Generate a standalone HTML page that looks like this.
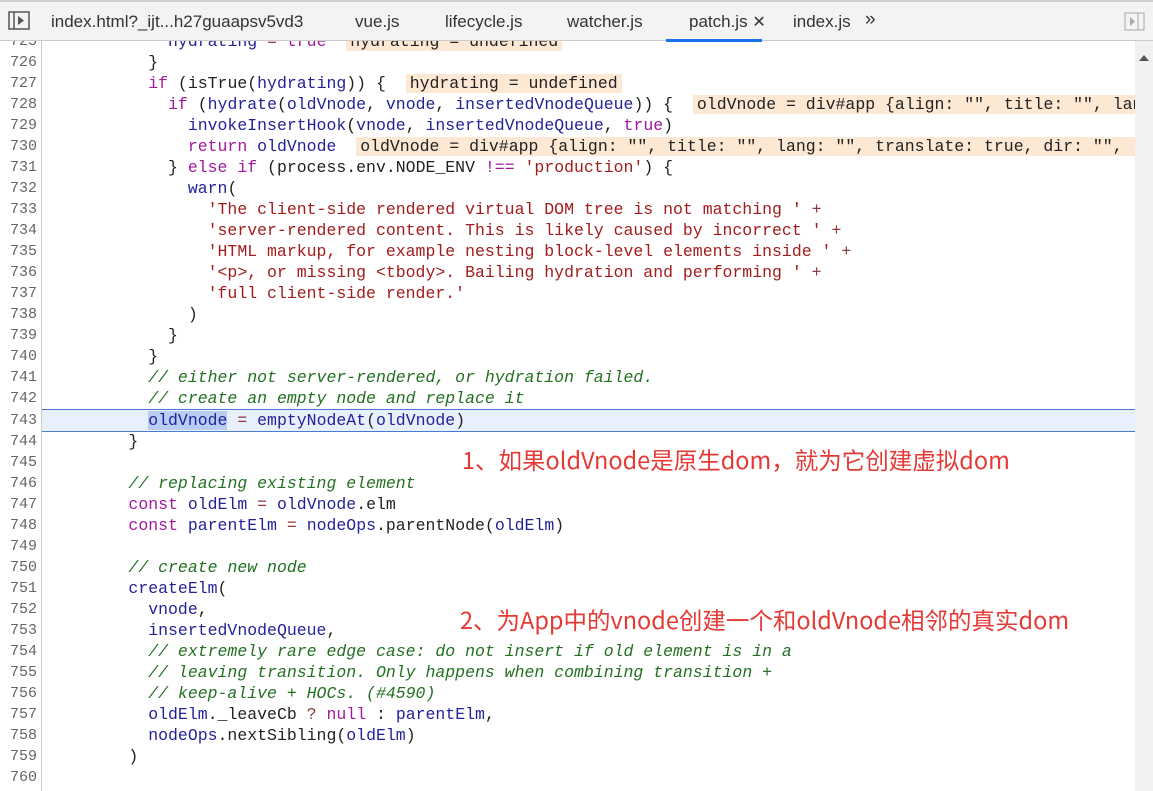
<!DOCTYPE html>
<html><head><meta charset="utf-8"><style>
*{margin:0;padding:0;box-sizing:border-box}
body{width:1153px;height:791px;overflow:hidden;background:#fff;position:relative;font-family:"Liberation Sans","Noto Sans CJK SC",sans-serif}
#tabs{position:absolute;left:0;top:0;width:1153px;height:41px;background:#f3f3f3;border-bottom:1px solid #cbcbcb;border-top:2px solid #d0d0d0;font-size:17px;color:#333}
#tabs span{position:absolute;top:10px;white-space:nowrap}
#ul{position:absolute;left:666px;top:37px;width:96px;height:3px;background:#1a73e8}
#gut{position:absolute;left:0;top:41px;width:42px;height:750px;border-right:1px solid #ccc;background:#fff}
#sb{position:absolute;left:1135px;top:41px;width:18px;height:750px;background:#f1f1f1}
#code{position:absolute;left:0;top:41px;width:1135px;height:750px;overflow:hidden}
.l{position:absolute;left:0;height:21px;width:1135px;white-space:pre;font-family:"Liberation Mono",monospace;font-size:16.5px;line-height:21px;color:#222}
.n{position:absolute;left:0;width:37px;text-align:right;color:#666;font-size:15px}
.c{position:absolute;left:69px}
.k{color:#a1199e}.v{color:#232398}.s{color:#a31c1c}.m{color:#237023;font-style:italic}.o{color:#8b3b3b}
.b{background:#fde8d3;padding:0 4px}
.hl{background:#e8f0fe;border-top:1px solid #4a7bd0;border-bottom:1px solid #4a7bd0}
.sel{background:#b9cdf6}
.a{position:absolute;color:#e53935;font-size:23.5px;white-space:nowrap;font-family:"Noto Sans CJK SC",sans-serif}
</style></head><body>
<div id="tabs">
<svg style="position:absolute;left:8px;top:9px" width="22" height="20"><rect x="1" y="1" width="20" height="17" fill="none" stroke="#555" stroke-width="1.5"/><line x1="6" y1="1" x2="6" y2="18" stroke="#555" stroke-width="1.5"/><path d="M10 5 L16 9.5 L10 14Z" fill="#555"/></svg>
<span style="left:51px">index.html?_ijt...h27guaapsv5vd3</span>
<span style="left:355px">vue.js</span>
<span style="left:445px">lifecycle.js</span>
<span style="left:567px">watcher.js</span>
<span style="left:689px">patch.js <span style="position:static;font-size:16px">✕</span></span>
<span style="left:793px">index.js</span>
<span style="left:865px;font-size:19px;top:7px">»</span>
<svg style="position:absolute;left:1124px;top:10px" width="22" height="20"><rect x="1" y="1" width="19" height="17" fill="none" stroke="#aaa"/><line x1="14" y1="1" x2="14" y2="18" stroke="#aaa"/><path d="M6 5 L11 9.5 L6 14Z" fill="#aaa"/></svg>
<div id="ul"></div>
</div>
<div id="gut"></div>
<div id="sb"><div style="position:absolute;left:4px;top:14px;border-left:5px solid transparent;border-right:5px solid transparent;border-bottom:6px solid #555"></div></div>
<div id="code">
<div class="l" style="top:-10px"><span class="n">725</span><span class="c">          <span class="v">hydrating</span> <span class="o">=</span> <span class="k">true</span>  <span class="b">hydrating = undefined</span></span></div>
<div class="l" style="top:11px"><span class="n">726</span><span class="c">        }</span></div>
<div class="l" style="top:32px"><span class="n">727</span><span class="c">        <span class="k">if</span> (isTrue(<span class="v">hydrating</span>)) {  <span class="b">hydrating = undefined</span></span></div>
<div class="l" style="top:53px"><span class="n">728</span><span class="c">          <span class="k">if</span> (<span class="v">hydrate</span>(<span class="v">oldVnode</span>, <span class="v">vnode</span>, <span class="v">insertedVnodeQueue</span>)) {  <span class="b">oldVnode = div#app {align: "", title: "", lang: "", translate</span></span></div>
<div class="l" style="top:74px"><span class="n">729</span><span class="c">            <span class="v">invokeInsertHook</span>(<span class="v">vnode</span>, <span class="v">insertedVnodeQueue</span>, <span class="k">true</span>)</span></div>
<div class="l" style="top:95px"><span class="n">730</span><span class="c">            <span class="k">return</span> <span class="v">oldVnode</span>  <span class="b">oldVnode = div#app {align: "", title: "", lang: "", translate: true, dir: "", ...</span></span></div>
<div class="l" style="top:116px"><span class="n">731</span><span class="c">          } <span class="k">else if</span> (process.env.NODE_ENV <span class="k">!==</span> <span class="s">'production'</span>) {</span></div>
<div class="l" style="top:137px"><span class="n">732</span><span class="c">            <span class="v">warn</span>(</span></div>
<div class="l" style="top:158px"><span class="n">733</span><span class="c">              <span class="s">'The client-side rendered virtual DOM tree is not matching '</span> <span class="o">+</span></span></div>
<div class="l" style="top:179px"><span class="n">734</span><span class="c">              <span class="s">'server-rendered content. This is likely caused by incorrect '</span> <span class="o">+</span></span></div>
<div class="l" style="top:200px"><span class="n">735</span><span class="c">              <span class="s">'HTML markup, for example nesting block-level elements inside '</span> <span class="o">+</span></span></div>
<div class="l" style="top:221px"><span class="n">736</span><span class="c">              <span class="s">'&lt;p&gt;, or missing &lt;tbody&gt;. Bailing hydration and performing '</span> <span class="o">+</span></span></div>
<div class="l" style="top:242px"><span class="n">737</span><span class="c">              <span class="s">'full client-side render.'</span></span></div>
<div class="l" style="top:263px"><span class="n">738</span><span class="c">            )</span></div>
<div class="l" style="top:284px"><span class="n">739</span><span class="c">          }</span></div>
<div class="l" style="top:305px"><span class="n">740</span><span class="c">        }</span></div>
<div class="l" style="top:326px"><span class="n">741</span><span class="c">        <span class="m">// either not server-rendered, or hydration failed.</span></span></div>
<div class="l" style="top:347px"><span class="n">742</span><span class="c">        <span class="m">// create an empty node and replace it</span></span></div>
<div class="l hl" style="top:368px;left:42px;width:1093px;height:23px"></div>
<div class="l" style="top:369px"><span class="n">743</span><span class="c">        <span class="v sel">oldVnode</span> <span class="o">=</span> <span class="v">emptyNodeAt</span>(<span class="v">oldVnode</span>)</span></div>
<div class="l" style="top:390px"><span class="n">744</span><span class="c">      }</span></div>
<div class="l" style="top:411px"><span class="n">745</span></div>
<div class="l" style="top:432px"><span class="n">746</span><span class="c">      <span class="m">// replacing existing element</span></span></div>
<div class="l" style="top:453px"><span class="n">747</span><span class="c">      <span class="k">const</span> <span class="v">oldElm</span> <span class="o">=</span> <span class="v">oldVnode</span>.elm</span></div>
<div class="l" style="top:474px"><span class="n">748</span><span class="c">      <span class="k">const</span> <span class="v">parentElm</span> <span class="o">=</span> <span class="v">nodeOps</span>.parentNode(<span class="v">oldElm</span>)</span></div>
<div class="l" style="top:495px"><span class="n">749</span></div>
<div class="l" style="top:516px"><span class="n">750</span><span class="c">      <span class="m">// create new node</span></span></div>
<div class="l" style="top:537px"><span class="n">751</span><span class="c">      <span class="v">createElm</span>(</span></div>
<div class="l" style="top:558px"><span class="n">752</span><span class="c">        <span class="v">vnode</span>,</span></div>
<div class="l" style="top:579px"><span class="n">753</span><span class="c">        <span class="v">insertedVnodeQueue</span>,</span></div>
<div class="l" style="top:600px"><span class="n">754</span><span class="c">        <span class="m">// extremely rare edge case: do not insert if old element is in a</span></span></div>
<div class="l" style="top:621px"><span class="n">755</span><span class="c">        <span class="m">// leaving transition. Only happens when combining transition +</span></span></div>
<div class="l" style="top:642px"><span class="n">756</span><span class="c">        <span class="m">// keep-alive + HOCs. (#4590)</span></span></div>
<div class="l" style="top:663px"><span class="n">757</span><span class="c">        <span class="v">oldElm</span>._leaveCb <span class="o">?</span> <span class="k">null</span> : <span class="v">parentElm</span>,</span></div>
<div class="l" style="top:684px"><span class="n">758</span><span class="c">        <span class="v">nodeOps</span>.nextSibling(<span class="v">oldElm</span>)</span></div>
<div class="l" style="top:705px"><span class="n">759</span><span class="c">      )</span></div>
<div class="l" style="top:726px"><span class="n">760</span></div>
</div>
<div class="a" style="left:462px;top:442px">1、如果oldVnode是原生dom，就为它创建虚拟dom</div>
<div class="a" style="left:460px;top:602px">2、为App中的vnode创建一个和oldVnode相邻的真实dom</div>
</body></html>
